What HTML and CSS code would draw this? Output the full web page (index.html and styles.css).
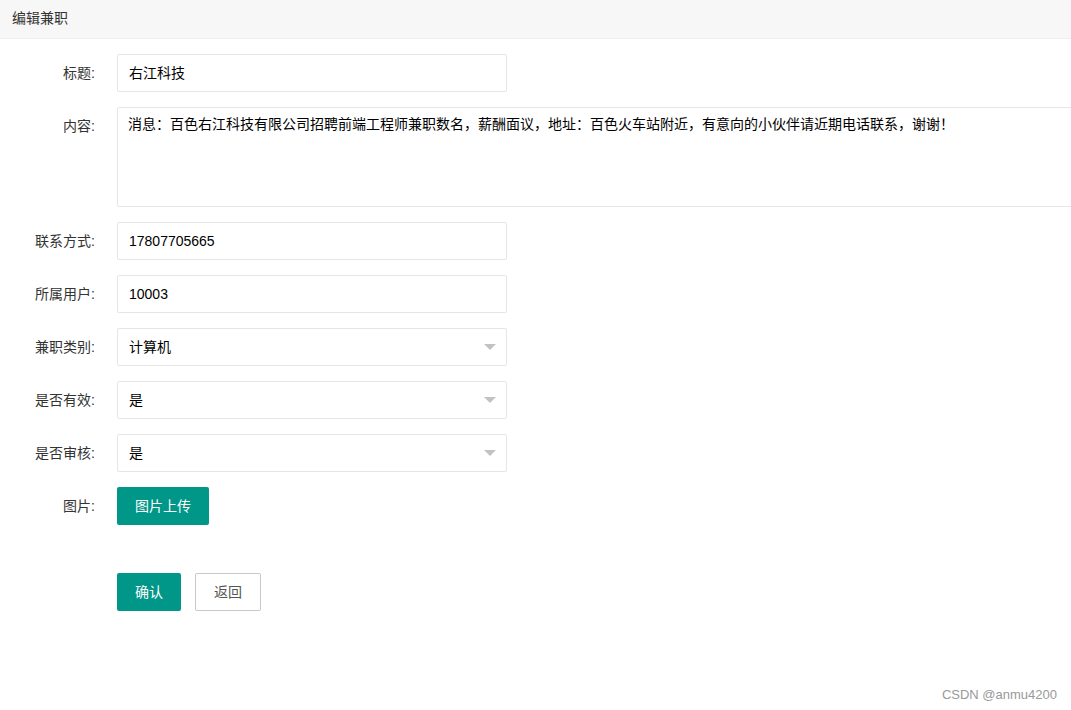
FILE: index.html
```html
<!DOCTYPE html>
<html lang="zh-CN">
<head>
<meta charset="utf-8">
<title>编辑兼职</title>
<link rel="stylesheet" href="styles.css">
</head>
<body>
<div class="page">
  <div class="card-header">编辑兼职</div>
  <form class="form">
    <div class="form-item">
      <label class="form-label">标题:</label>
      <div class="field"><div class="input">右江科技</div></div>
    </div>
    <div class="form-item">
      <label class="form-label">内容:</label>
      <div class="field"><div class="textarea">消息：百色右江科技有限公司招聘前端工程师兼职数名，薪酬面议，地址：百色火车站附近，有意向的小伙伴请近期电话联系，谢谢！</div></div>
    </div>
    <div class="form-item">
      <label class="form-label">联系方式:</label>
      <div class="field"><div class="input">17807705665</div></div>
    </div>
    <div class="form-item">
      <label class="form-label">所属用户:</label>
      <div class="field"><div class="input">10003</div></div>
    </div>
    <div class="form-item">
      <label class="form-label">兼职类别:</label>
      <div class="field"><div class="input select">计算机<i class="edge"></i></div></div>
    </div>
    <div class="form-item">
      <label class="form-label">是否有效:</label>
      <div class="field"><div class="input select">是<i class="edge"></i></div></div>
    </div>
    <div class="form-item">
      <label class="form-label">是否审核:</label>
      <div class="field"><div class="input select">是<i class="edge"></i></div></div>
    </div>
    <div class="form-item">
      <label class="form-label">图片:</label>
      <div class="field"><button type="button" class="btn">图片上传</button></div>
    </div>
    <div class="form-item actions">
      <div class="form-label"></div>
      <div class="field buttons">
        <button type="button" class="btn">确认</button>
        <button type="button" class="btn btn-primary">返回</button>
      </div>
    </div>
  </form>
  <div class="watermark">CSDN @anmu4200</div>
</div>
</body>
</html>
```
FILE: styles.css
```css
html, body {
  margin: 0;
  padding: 0;
  overflow: hidden;
  background: #fff;
}
body {
  font-family: "Liberation Sans", "Noto Sans CJK SC", sans-serif;
  font-size: 14px;
  color: #333;
}
.page {
  position: relative;
  width: 1071px;
  height: 710px;
}
.card-header {
  height: 38px;
  line-height: 36px;
  padding-left: 12px;
  background: #f7f7f7;
  border-bottom: 1px solid #eeeeee;
  color: #333;
  font-size: 14px;
}
.form {
  padding-top: 15px;
}
.form-item {
  display: flex;
  margin-bottom: 15px;
}
.form-label {
  width: 95px;
  flex: none;
  text-align: right;
  padding: 9px 0;
  line-height: 20px;
  color: #333;
  margin-right: 22px;
}
.field {
  flex: none;
}
.input {
  box-sizing: border-box;
  position: relative;
  width: 390px;
  height: 38px;
  line-height: 36px;
  padding-left: 11px;
  border: 1px solid #e6e6e6;
  border-radius: 2px;
  background: #fff;
  color: #000;
}
.textarea {
  box-sizing: border-box;
  width: 1000px;
  height: 100px;
  padding: 6px 10px;
  line-height: 20px;
  border: 1px solid #e6e6e6;
  border-radius: 2px;
  color: #000;
  white-space: nowrap;
}
.edge {
  position: absolute;
  right: 10px;
  top: 50%;
  margin-top: -3px;
  width: 0;
  height: 0;
  border-style: solid;
  border-width: 6px 6px 0 6px;
  border-color: #c2c2c2 transparent transparent transparent;
}
.btn {
  display: inline-block;
  box-sizing: border-box;
  height: 38px;
  line-height: 38px;
  padding: 0 18px;
  background: #009688;
  color: #fff;
  border: none;
  border-radius: 2px;
  font-family: inherit;
  font-size: 14px;
  cursor: pointer;
}
.actions {
  margin-top: 48px;
}
.actions .form-label {
  padding: 0;
}
.buttons {
  display: flex;
  gap: 14px;
}
.btn-primary {
  background: #fff;
  color: #555;
  border: 1px solid #c9c9c9;
  line-height: 36px;
  width: 66px;
  padding: 0;
}
.watermark {
  position: absolute;
  right: 14px;
  bottom: 8px;
  font-family: "Liberation Sans", Arial, sans-serif;
  font-size: 13px;
  color: #999;
}
```
